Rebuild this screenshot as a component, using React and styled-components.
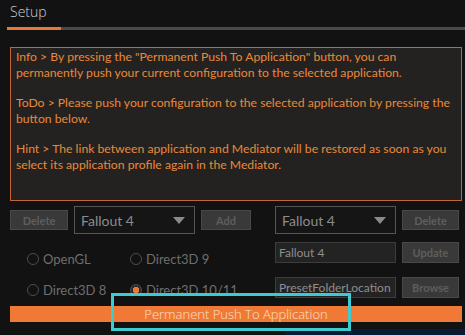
import { createGlobalStyle, styled } from 'styled-components'

const GlobalStyle = createGlobalStyle`
  html, body {
    margin: 0;
    padding: 0;
    background: #121212;
  }
  body {
    width: 465px;
    height: 335px;
    overflow: hidden;
    font-family: 'Lato', 'Open Sans', sans-serif;
  }
`

function Arrow() {
  return (
    <svg width='12' height='7' viewBox='0 0 12 7'>
      <path d='M0 0 L12 0 L6 7 Z' fill='#8a8a8a' />
    </svg>
  )
}

function App() {
  return (
    <Page>
      <GlobalStyle />
      <TabBar>
        <Tab>Setup</Tab>
      </TabBar>
      <TabLine>
        <ActiveLine />
      </TabLine>

      <Content>
        <InfoBox>
          <p>
            Info &gt; By pressing the "Permanent Push To Application" button, you can
            permanently push your current configuration to the selected application.
          </p>
          <p>
            ToDo &gt; Please push your configuration to the selected application by pressing the
            button below.
          </p>
          <p>
            Hint &gt; The link between application and Mediator will be restored as soon as you
            select its application profile again in the Mediator.
          </p>
        </InfoBox>

        <Controls>
          <LeftColumn>
            <ButtonRow>
              <Button $w={58}>Delete</Button>
              <Select>
                Fallout 4
                <Arrow />
              </Select>
              <Button $w={50}>Add</Button>
            </ButtonRow>
            <Radios>
              <Radio>
                <Dot />
                OpenGL
              </Radio>
              <Radio>
                <Dot />
                Direct3D 9
              </Radio>
              <Radio>
                <Dot />
                Direct3D 8
              </Radio>
              <Radio>
                <Dot $checked />
                Direct3D 10/11
              </Radio>
            </Radios>
          </LeftColumn>

          <RightColumn>
            <ButtonRow>
              <Select>
                Fallout 4
                <Arrow />
              </Select>
              <Button $w={57}>Delete</Button>
            </ButtonRow>
            <ButtonRow $top={8}>
              <Input>Fallout 4</Input>
              <Button $w={57} $h={21}>Update</Button>
            </ButtonRow>
            <ButtonRow $top={14}>
              <Input>PresetFolderLocation</Input>
              <Button $w={57} $h={21}>Browse</Button>
            </ButtonRow>
          </RightColumn>
        </Controls>

        <PushBar>Permanent Push To Application</PushBar>
      </Content>

      <Footer>
        <FooterBlue />
      </Footer>

      <Highlight />
    </Page>
  )
}

export default App

const Page = styled.div`
  position: relative;
  width: 465px;
  height: 335px;
  background: #121212;
  display: flex;
  flex-direction: column;
`

const TabBar = styled.div`
  display: flex;
  height: 27px;
  padding-left: 10px;
`

const Tab = styled.div`
  font-family: 'Open Sans', sans-serif;
  font-weight: 300;
  font-size: 14px;
  color: #cfcfcf;
  line-height: 24px;
`

const TabLine = styled.div`
  height: 3px;
  margin-left: 7px;
  background: #4a4a4a;
`

const ActiveLine = styled.div`
  width: 54px;
  height: 100%;
  background: #e8773a;
`

const Content = styled.div`
  padding: 17px 3px 0 10px;
`

const InfoBox = styled.div`
  height: 154px;
  box-sizing: border-box;
  border: 1px solid #c2663a;
  background: #242220;
  padding: 1px 5px;
  color: #e8893a;
  font-size: 12.2px;
  line-height: 16px;

  & p {
    margin: 0 0 14px;
  }
`

const Controls = styled.div`
  display: flex;
  align-items: flex-start;
  gap: 23px;
  margin-top: 5px;
  height: 100px;
`

const LeftColumn = styled.div`
  width: 242px;
`

const RightColumn = styled.div`
  width: 184px;
  display: flex;
  flex-direction: column;
`

const ButtonRow = styled.div`
  display: flex;
  align-items: center;
  gap: 6px;
  margin-top: ${(p) => p.$top || 0}px;
`

const Button = styled.div`
  width: ${(p) => p.$w}px;
  height: ${(p) => p.$h || 20}px;
  box-sizing: border-box;
  background: #393939;
  border: 1px solid #484848;
  color: #5e5e5e;
  font-size: 11px;
  font-weight: 700;
  display: flex;
  align-items: center;
  justify-content: center;
`

const Select = styled.div`
  width: 121px;
  height: 28px;
  box-sizing: border-box;
  border: 1px solid #555;
  background: #151515;
  color: #8c8c8c;
  font-size: 14px;
  display: flex;
  align-items: center;
  justify-content: space-between;
  padding: 0 9px 0 6px;
`

const Input = styled.div`
  width: 121px;
  height: 21px;
  box-sizing: border-box;
  border: 1px solid #3c3c3c;
  background: #232323;
  color: #8e8e8e;
  font-size: 12px;
  display: flex;
  align-items: center;
  padding: 0 3px;
  white-space: nowrap;
  overflow: hidden;
`

const Radios = styled.div`
  display: grid;
  grid-template-columns: 103px 100px;
  row-gap: 11px;
  padding: 15px 0 0 17px;
`

const Radio = styled.div`
  display: flex;
  align-items: center;
  gap: 4px;
  color: #6e6e6e;
  font-size: 13px;
  height: 20px;
  white-space: nowrap;
`

const Dot = styled.span`
  flex: none;
  width: 12px;
  height: 12px;
  box-sizing: border-box;
  border-radius: 50%;
  border: 1px solid #4c4c4c;
  background: ${(p) => (p.$checked ? 'radial-gradient(circle, #e8773a 0 3px, #2a2a2a 3.5px)' : 'transparent')};
`

const PushBar = styled.div`
  height: 16px;
  background: #f07a35;
  color: #fbe0c8;
  font-family: 'Open Sans', sans-serif;
  font-weight: 300;
  font-size: 13px;
  line-height: 16px;
  text-align: center;
`

const Footer = styled.div`
  margin-top: auto;
  height: 6px;
  display: flex;
  justify-content: flex-end;
`

const FooterBlue = styled.div`
  width: 180px;
  background: #0b1a33;
`

const Highlight = styled.div`
  position: absolute;
  left: 111px;
  top: 293px;
  width: 240px;
  height: 38px;
  box-sizing: border-box;
  border: 3px solid #3ecbd0;
`
